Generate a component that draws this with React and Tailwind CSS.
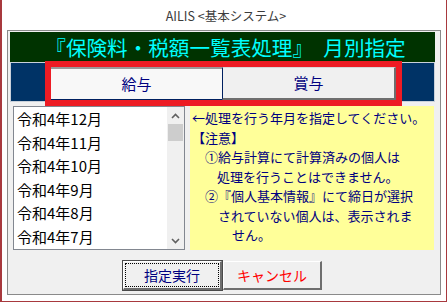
const jp = { fontFamily: '"Noto Sans CJK JP", "Noto Sans", sans-serif' }

const months = ['令和4年12月', '令和4年11月', '令和4年10月', '令和4年9月', '令和4年8月', '令和4年7月']

const notes = [
  { text: '←処理を行う年月を指定してください。', indent: 'pl-0' },
  { text: '【注意】', indent: 'pl-0' },
  { text: '①給与計算にて計算済みの個人は', indent: 'pl-[13px]' },
  { text: '処理を行うことはできません。', indent: 'pl-[25px]' },
  { text: '②『個人基本情報』にて締日が選択', indent: 'pl-[13px]' },
  { text: 'されていない個人は、表示されま', indent: 'pl-[26px]' },
  { text: 'せん。', indent: 'pl-[40px]' },
]

function Chevron({ down }) {
  return (
    <svg width="9" height="6" viewBox="0 0 9 6" className="block">
      <path
        d={down ? 'M1 1 L4.5 4.5 L8 1' : 'M1 5 L4.5 1.5 L8 5'}
        fill="none"
        stroke="#606060"
        strokeWidth="1.6"
      />
    </svg>
  )
}

export default function App() {
  return (
    <div className="w-[448px] h-[303px] bg-white overflow-hidden" style={jp}>
      <div className="w-[447px] h-[302px] border-l-2 border-r border-b border-[#a8393e] flex flex-col">
        {/* Title */}
        <div className="h-[30px] pt-[2px] pl-[4px] flex items-center justify-center text-[12.5px] text-[#3c3c3c]">
          AILIS &lt;基本システム&gt;
        </div>

        {/* Dialog panel */}
        <div className="ml-[5px] w-[434px] h-[265px] border border-[#8a8a8a] bg-[#f0f0f0] flex flex-col">
          <div className="mt-px ml-[2px] w-[425px] h-[30px] bg-[#003300] flex items-center justify-center pl-[6px] text-[20.6px] leading-none text-[#00ffff] whitespace-nowrap">
            『保険料・税額一覧表処理』　月別指定
          </div>

          <div className="ml-[2px] w-[425px] h-[40px] border border-[#c9d1da] bg-[#003366] pt-[4px] pl-[40px]">
            <div className="relative flex w-[345px] h-[33px]">
              <div className="w-[171px] h-full bg-[#f8f8f8] border-t-2 border-[#9a9a9a] border-b border-b-[#002060] flex items-center justify-center text-[15px] text-[#000080]">
                給与
              </div>
              <div className="w-[174px] h-full bg-[#f0f0f0] border-l border-l-[#002060] border-t border-t-[#d8d8d8] border-r-2 border-r-[#6e6e6e] border-b-2 border-b-[#6e6e6e] flex items-center justify-center text-[15px] text-[#000080]">
                賞与
              </div>
              <div className="absolute -inset-[6px] border-[6px] border-[#ed1c24] pointer-events-none" />
            </div>
          </div>

          <div className="mt-[4px] ml-[5px] flex gap-[5px]">
            {/* List box */}
            <div className="w-[172px] h-[144px] border border-[#828790] bg-white flex">
              <div className="flex-1 overflow-hidden pl-[3px]">
                {months.map(m => (
                  <div key={m} className="h-[23.5px] leading-[23.5px] text-[15px] text-black whitespace-nowrap">
                    {m}
                  </div>
                ))}
              </div>
              <div className="w-[17px] h-full bg-[#f0f0f0] flex flex-col items-center">
                <div className="h-[17px] flex items-center justify-center">
                  <Chevron />
                </div>
                <div className="w-[15px] h-[17px] bg-[#cdcdcd]" />
                <div className="flex-1" />
                <div className="h-[17px] flex items-center justify-center">
                  <Chevron down />
                </div>
              </div>
            </div>

            {/* Notice */}
            <div className="w-[244px] h-[144px] bg-[#ffff99] pt-[2px] pl-[2px] text-[13px] text-[#000080]">
              {notes.map(n => (
                <div key={n.text} className={`h-[19.5px] leading-[19.5px] whitespace-nowrap ${n.indent}`}>
                  {n.text}
                </div>
              ))}
            </div>
          </div>

          <div className="mt-[11px] flex justify-center gap-px pr-[3px]">
            <button className="relative w-[99px] h-[29px] bg-[#f0f0f0] border-t border-l border-white border-r-2 border-b-2 border-r-[#6e6e6e] border-b-[#6e6e6e] outline outline-1 outline-[#4a4a4a] text-[14px] text-[#000080] flex items-center justify-center">
              <span className="absolute inset-[1px] border border-dotted border-black" />
              指定実行
            </button>
            <button className="w-[99px] h-[29px] bg-[#f0f0f0] border-t border-l border-white border-r-2 border-b-2 border-r-[#6e6e6e] border-b-[#6e6e6e] text-[14px] text-[#ff0000] flex items-center justify-center">
              キャンセル
            </button>
          </div>
        </div>
      </div>
    </div>
  )
}
